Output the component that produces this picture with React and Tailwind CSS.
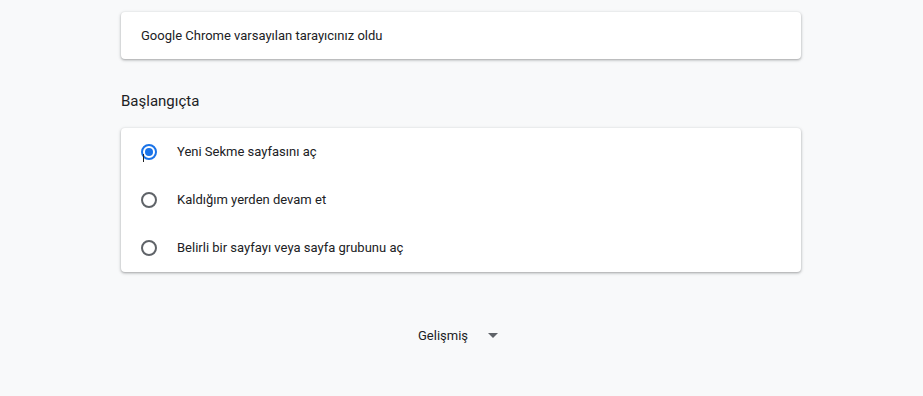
const options = [
  "Yeni Sekme sayfasını aç",
  "Kaldığım yerden devam et",
  "Belirli bir sayfayı veya sayfa grubunu aç",
];

const cardClass =
  "rounded bg-white shadow-[0_1px_2px_0_rgba(60,64,67,0.3),0_1px_3px_1px_rgba(60,64,67,0.15)]";

const Radio = ({ checked }) => (
  <div className="relative flex h-4 w-4 items-center justify-center">
    <div
      className={`h-4 w-4 rounded-full border-2 ${
        checked ? "border-[#1a73e8]" : "border-[#5f6368]"
      } flex items-center justify-center`}
    >
      {checked && <div className="h-2 w-2 rounded-full bg-[#1a73e8]" />}
    </div>
    {checked && (
      <div className="absolute left-[2px] top-[10px] h-[8px] w-px bg-[#202124]" />
    )}
  </div>
);

export default function App() {
  const selected = 0;

  return (
    <div className="h-[396px] w-full overflow-hidden bg-[#f8f9fa] font-['Roboto',sans-serif] text-[13px] text-[#202124]">
      <div className="ml-[121px] w-[680px] pt-3">
        <div className={`${cardClass} flex h-[47px] items-center px-5`}>
          Google Chrome varsayılan tarayıcınız oldu
        </div>

        <div className="pb-[17px] pt-[32px] text-[15px] leading-5">
          Başlangıçta
        </div>

        <div className={cardClass}>
          {options.map((label, i) => (
            <div key={label} className="flex h-12 items-center px-5">
              <div className="flex w-[36px]">
                <Radio checked={i === selected} />
              </div>
              <span>{label}</span>
            </div>
          ))}
        </div>

        <div className="mt-[54px] flex items-center pl-[297px]">
          <span className="text-[13px]">Gelişmiş</span>
          <svg
            className="ml-[20px]"
            width="10"
            height="5"
            viewBox="0 0 10 5"
          >
            <path d="M0 0 L10 0 L5 5 Z" fill="#5f6368" />
          </svg>
        </div>
      </div>
    </div>
  );
}
